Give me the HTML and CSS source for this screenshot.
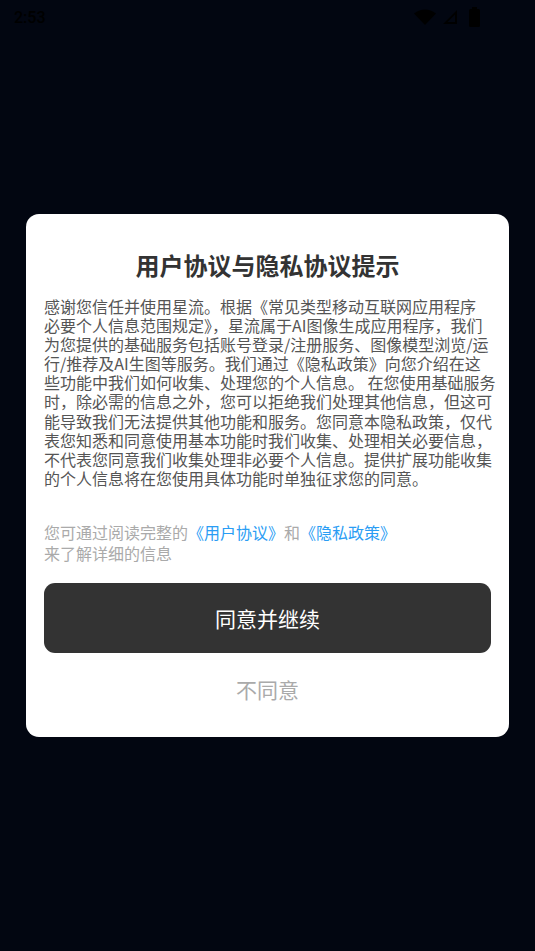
FILE: index.html
```html
<!DOCTYPE html>
<html lang="zh-CN">
<head>
<meta charset="utf-8">
<title>用户协议与隐私协议提示</title>
<link rel="stylesheet" href="styles.css">
</head>
<body>
<div class="screen">
  <div class="status-bar">
    <span class="time">2:53</span>
    <div class="status-icons">
      <svg class="icon-wifi" width="22" height="16" viewBox="0 0 22 16"><path d="M0 4.5 Q11 -3.5 22 4.5 L11 16 Z" fill="#000"/></svg>
      <svg class="icon-signal" width="16" height="16" viewBox="0 0 16 16"><path d="M15 1 L15 15 L1 15 Z M13 5.5 L5.5 13 L13 13 Z" fill="#000" fill-rule="evenodd"/></svg>
      <svg class="icon-battery" width="11" height="20" viewBox="0 0 11 20"><rect x="3" y="0" width="5" height="2" fill="#000"/><rect x="0" y="2" width="11" height="18" rx="1.5" fill="#000"/></svg>
    </div>
  </div>

  <div class="dialog">
    <h1 class="dialog-title">用户协议与隐私协议提示</h1>
    <p class="dialog-body">感谢您信任并使用星流。根据《常见类型移动互联网应用程序<br>必要个人信息范围规定》，星流属于AI图像生成应用程序，我们<br>为您提供的基础服务包括账号登录/注册服务、图像模型浏览/运<br>行/推荐及AI生图等服务。我们通过《隐私政策》向您介绍在这<br>些功能中我们如何收集、处理您的个人信息。 在您使用基础服务<br>时，除必需的信息之外，您可以拒绝我们处理其他信息，但这可<br>能导致我们无法提供其他功能和服务。您同意本隐私政策，仅代<br>表您知悉和同意使用基本功能时我们收集、处理相关必要信息，<br>不代表您同意我们收集处理非必要个人信息。提供扩展功能收集<br>的个人信息将在您使用具体功能时单独征求您的同意。</p>
    <p class="dialog-links">您可通过阅读完整的<a class="link" href="#">《用户协议》</a>和<a class="link" href="#">《隐私政策》</a><br>来了解详细的信息</p>
    <button class="btn-agree" type="button">同意并继续</button>
    <button class="btn-disagree" type="button">不同意</button>
  </div>
</div>
</body>
</html>
```

FILE: styles.css
```css
html, body {
  margin: 0;
  padding: 0;
  background: #020611;
}

body {
  font-family: "Noto Sans CJK SC", "Noto Sans", "Liberation Sans", sans-serif;
}

.screen {
  width: 535px;
  height: 951px;
  display: flex;
  flex-direction: column;
  align-items: center;
}

.status-bar {
  width: 100%;
  box-sizing: border-box;
  height: 34px;
  padding: 0 55px 0 14px;
  display: flex;
  align-items: center;
  justify-content: space-between;
}

.time {
  color: #000;
  font-family: "Roboto", "Liberation Sans", sans-serif;
  font-size: 16px;
  font-weight: 500;
}

.status-icons {
  display: flex;
  align-items: center;
  gap: 6px;
}

.icon-battery {
  margin-left: 5px;
}

.dialog {
  margin-top: 180px;
  width: 483px;
  box-sizing: border-box;
  background: #fff;
  border-radius: 13px;
  padding: 31px 18px 0 18px;
  display: flex;
  flex-direction: column;
}

.dialog-title {
  margin: 0;
  text-align: center;
  font-size: 24px;
  line-height: 39px;
  font-weight: 700;
  color: #333;
}

.dialog-body {
  margin: 13px 0 0 0;
  font-size: 16px;
  line-height: 19.1px;
  color: #555;
  white-space: nowrap;
}

.dialog-links {
  margin: 34px 0 0 0;
  font-size: 16px;
  line-height: 21.5px;
  color: #aaa;
  white-space: nowrap;
}

.link {
  color: #2a9df4;
  text-decoration: none;
}

.btn-agree {
  margin-top: 18px;
  height: 70px;
  border: none;
  border-radius: 11px;
  background: #333;
  color: #fff;
  font-family: inherit;
  font-size: 21px;
  padding: 0;
}

.btn-disagree {
  margin: 14px 0 0 0;
  height: 44px;
  border: none;
  background: transparent;
  color: #aaa;
  font-family: inherit;
  font-size: 21px;
  padding: 0;
  margin-bottom: 26px;
}
```
